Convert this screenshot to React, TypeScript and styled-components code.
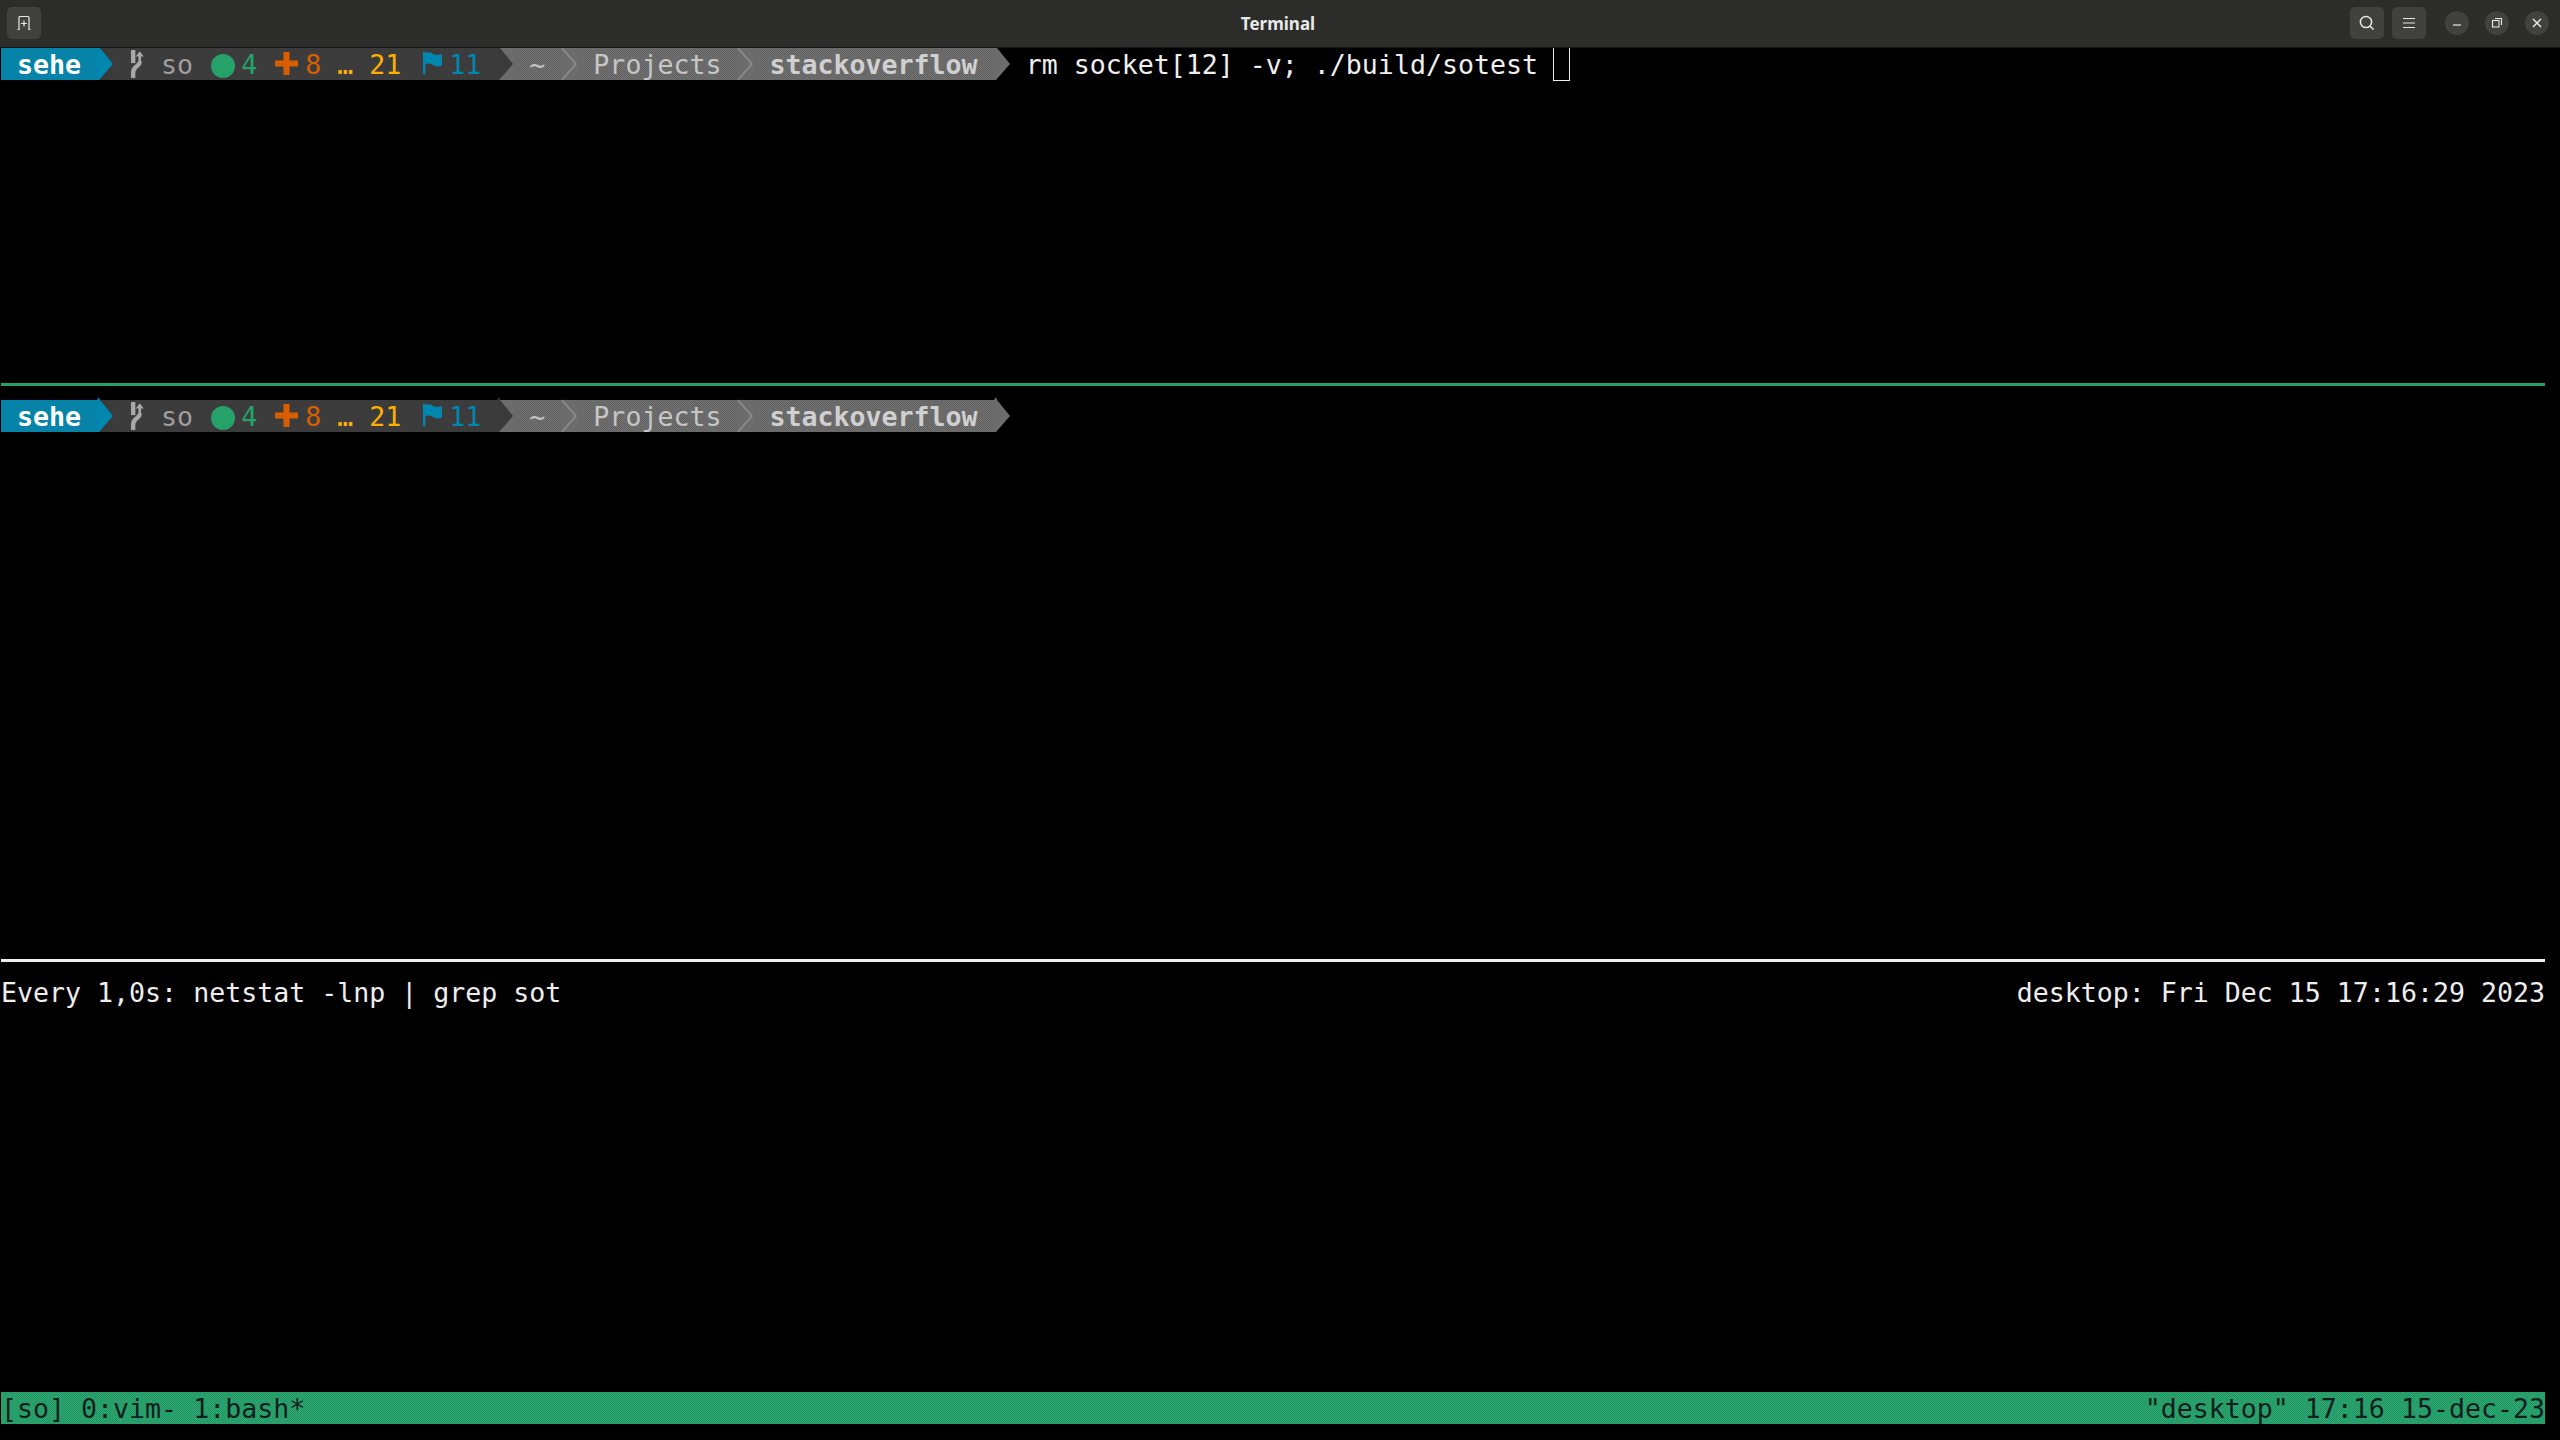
import React from 'react';
import styled, { createGlobalStyle, css } from 'styled-components';

const CELL = 16;
const ROW = 32;

// the source is a GIF, flat colours come out with a 2px dither on them
const dither = css`
  background-image: conic-gradient(
    rgba(0, 0, 0, 0.09) 25%,
    rgba(255, 255, 255, 0.04) 0 50%,
    rgba(0, 0, 0, 0.09) 0 75%,
    rgba(255, 255, 255, 0.04) 0
  );
  background-size: 2px 2px;
`;

const GlobalStyle = createGlobalStyle`
  html, body {
    margin: 0;
    padding: 0;
    background: #000;
  }
`;

const Window = styled.div`
  width: 2560px;
  height: 1440px;
  background: #000;
  overflow: hidden;
  font-family: "DejaVu Sans Mono", "Liberation Mono", monospace;
  font-size: 26.6px;
  color: #eeeeee;
`;

const TitleBar = styled.div`
  position: relative;
  z-index: 1;
  height: 48px;
  box-sizing: border-box;
  border-bottom: 1px solid #141414;
  padding: 7px 11px 0 7px;
  display: flex;
  align-items: flex-start;
  background-color: #2c2c2a;
  background-image: conic-gradient(#25252e 25%, #333326 0 50%, #25252e 0 75%, #333326 0);
  background-size: 2px 2px;
`;

const TitleGroup = styled.div<{ $end?: boolean }>`
  flex: 1 1 0;
  display: flex;
  justify-content: ${(p) => (p.$end ? 'flex-end' : 'flex-start')};
`;

const TitleText = styled.div`
  font-family: "Noto Sans", "Open Sans", sans-serif;
  font-size: 17px;
  font-weight: 700;
  line-height: 34px;
  color: #e8e8e8;
`;

const HeaderButton = styled.div<{ $gap?: number }>`
  width: 34px;
  height: 32px;
  border-radius: 5px;
  background: rgba(255, 255, 255, 0.1);
  display: flex;
  align-items: center;
  justify-content: center;
  margin-left: ${(p) => p.$gap ?? 0}px;
`;

const WindowButton = styled.div<{ $gap: number }>`
  width: 24px;
  height: 24px;
  margin: 4px 0 0 ${(p) => p.$gap}px;
  border-radius: 50%;
  background: rgba(255, 255, 255, 0.1);
  display: flex;
  align-items: center;
  justify-content: center;
`;

const Screen = styled.div`
  padding-left: 1px;
  width: 2544px;
`;

const Row = styled.div`
  height: ${ROW}px;
  display: flex;
  align-items: flex-end;
  white-space: pre;
`;

const SpacerRows = styled.div<{ $rows: number }>`
  height: ${(p) => p.$rows * ROW}px;
`;

const Segment = styled.div<{ $bg: string; $color: string; $bold?: boolean; $flat?: boolean }>`
  height: ${ROW}px;
  display: flex;
  align-items: flex-start;
  background-color: ${(p) => p.$bg};
  ${(p) => !p.$flat && dither}
  color: ${(p) => p.$color};
  font-weight: ${(p) => (p.$bold ? 700 : 400)};
  line-height: ${ROW + 2}px;
`;

const Text = styled.span<{ $color?: string }>`
  color: ${(p) => p.$color ?? 'inherit'};
`;

const Glyph = styled.span<{ $cols: number; $left: number; $top: number }>`
  width: ${(p) => p.$cols * CELL}px;
  height: ${ROW}px;
  box-sizing: border-box;
  flex: none;
  display: flex;
  align-items: flex-start;
  padding: ${(p) => p.$top}px 0 0 ${(p) => p.$left}px;

  svg {
    display: block;
  }
`;

const Arrow = styled.svg`
  display: block;
  flex: none;
  width: ${CELL}px;
  height: 35px;
`;

const Separator = styled.div<{ $color: string; $height: number }>`
  height: ${ROW}px;
  display: flex;
  align-items: center;

  &::before {
    content: '';
    flex: 1;
    height: ${(p) => p.$height}px;
    background: ${(p) => p.$color};
  }
`;

const WatchHeader = styled.div`
  height: ${ROW}px;
  line-height: ${ROW + 2}px;
  display: flex;
  justify-content: space-between;
  white-space: pre;
  color: #eeeeee;
`;

const StatusBar = styled.div`
  height: ${ROW}px;
  line-height: ${ROW + 2}px;
  display: flex;
  justify-content: space-between;
  white-space: pre;
  background-color: #25a46c;
  ${dither}
  color: #10201c;
`;

const Cursor = styled.span`
  width: ${CELL + 1}px;
  height: 34px;
  box-sizing: border-box;
  margin: 0 0 -1px -1px;
  border: 1px solid #eeeeee;
  flex: none;
`;

const SegmentArrow = ({ from, to }: { from: string; to: string }) => (
  <Arrow viewBox="0 0 16 35">
    <rect y="3" width="16" height="32" fill={to} />
    <path d="M0 3 L2 0 L3 3 L16 19 L2 35 L0 35 Z" fill={from} />
  </Arrow>
);

const Chevron = () => (
  <Arrow viewBox="0 0 16 35">
    <rect y="3" width="16" height="32" fill="#6c6c6c" />
    <path d="M1 3 L15 19 L1 35" fill="none" stroke="#8e8e8e" strokeWidth="1.6" />
  </Arrow>
);

const BranchIcon = () => (
  <svg width="16" height="32" viewBox="0 0 16 32">
    <path d="M2.5 0 V15" fill="none" stroke="#a8a8a8" strokeWidth="5" />
    <path d="M2.5 32 V25 Q2.5 22 6 19 Q10 16 10 13" fill="none" stroke="#a8a8a8" strokeWidth="5" />
    <path d="M10 14 V6" fill="none" stroke="#a8a8a8" strokeWidth="3" />
    <path d="M5.5 7.5 L10 1.5 L14.5 7.5 Z" fill="#a8a8a8" />
  </svg>
);

const PlusIcon = () => (
  <svg width="23" height="23" viewBox="0 0 23 23">
    <path d="M8.5 0 H14.5 V8.5 H23 V14.5 H14.5 V23 H8.5 V14.5 H0 V8.5 H8.5 Z" fill="#d75f00" />
  </svg>
);

const FlagIcon = () => (
  <svg width="19" height="22" viewBox="0 0 19 22">
    <path d="M1.2 0 V22" stroke="#0087af" strokeWidth="2.4" />
    <path d="M2 1 Q6 -1 10 2 Q14 4 19 2 V13.5 Q14 15.5 10 13 Q6 10.5 2 12.5 Z" fill="#0087af" />
  </svg>
);

const Dot = () => (
  <svg width="24" height="24" viewBox="0 0 24 24">
    <circle cx="12" cy="12" r="12" fill="#26a269" />
  </svg>
);

const Prompt = ({ command }: { command?: boolean }) => (
  <Row>
    <Segment $bg="#0087af" $color="#ffffff" $bold>
      {' sehe '}
    </Segment>
    <SegmentArrow from="#0087af" to="#3a3a3a" />
    <Segment $bg="#3a3a3a" $color="#9e9e9e">
      <Glyph $cols={2} $left={18} $top={0}>
        <BranchIcon />
      </Glyph>
      {' so '}
      <Glyph $cols={2} $left={2} $top={6}>
        <Dot />
      </Glyph>
      <Text $color="#26a269">4 </Text>
      <Glyph $cols={2} $left={2} $top={4}>
        <PlusIcon />
      </Glyph>
      <Text $color="#d75f00">8 </Text>
      <Text $color="#ffaf00">… 21 </Text>
      <Glyph $cols={2} $left={6} $top={4}>
        <FlagIcon />
      </Glyph>
      <Text $color="#0087af">11 </Text>
    </Segment>
    <SegmentArrow from="#3a3a3a" to="#6c6c6c" />
    <Segment $bg="#6c6c6c" $color="#c6c6c6">
      {' ~ '}
    </Segment>
    <Chevron />
    <Segment $bg="#6c6c6c" $color="#c6c6c6">
      {' Projects '}
    </Segment>
    <Chevron />
    <Segment $bg="#6c6c6c" $color="#d0d0d0" $bold>
      {' stackoverflow '}
    </Segment>
    <SegmentArrow from="#6c6c6c" to="#000000" />
    {command && (
      <>
        <Segment $bg="#000" $color="#eeeeee" $flat>
          {' rm socket[12] -v; ./build/sotest '}
        </Segment>
        <Cursor />
      </>
    )}
  </Row>
);

export default function App() {
  return (
    <Window>
      <GlobalStyle />
      <TitleBar>
        <TitleGroup>
          <HeaderButton>
            <svg width="16" height="16" viewBox="0 0 16 16" fill="none" stroke="#e8e8e8" strokeWidth="1.2">
              <path d="M1.5 14.5 H3 V2.5 Q3 1.5 4 1.5 H12 Q13 1.5 13 2.5 V14.5 H14.5" />
              <path d="M8 5.5 V11.5 M5 8.5 H11" />
            </svg>
          </HeaderButton>
        </TitleGroup>
        <TitleText>Terminal</TitleText>
        <TitleGroup $end>
          <HeaderButton>
            <svg width="16" height="16" viewBox="0 0 16 16" fill="none" stroke="#e8e8e8" strokeWidth="1.5">
              <circle cx="7" cy="7" r="5.6" />
              <path d="M11 11 L14.5 14.5" />
            </svg>
          </HeaderButton>
          <HeaderButton $gap={8}>
            <svg width="16" height="16" viewBox="0 0 16 16" stroke="#e8e8e8" strokeWidth="1.2">
              <path d="M2 3.5 H14 M2 8 H14 M2 12.5 H14" />
            </svg>
          </HeaderButton>
          <WindowButton $gap={19}>
            <svg width="12" height="12" viewBox="0 0 12 12" stroke="#e8e8e8" strokeWidth="1.2">
              <path d="M2 8 H10" />
            </svg>
          </WindowButton>
          <WindowButton $gap={16}>
            <svg width="12" height="12" viewBox="0 0 12 12" fill="none" stroke="#e8e8e8" strokeWidth="1.1">
              <rect x="1.5" y="3.5" width="6.5" height="6.5" />
              <path d="M4 1.5 H10.5 V8" />
            </svg>
          </WindowButton>
          <WindowButton $gap={16}>
            <svg width="12" height="12" viewBox="0 0 12 12" stroke="#e8e8e8" strokeWidth="1.5">
              <path d="M2 2 L10 10 M10 2 L2 10" />
            </svg>
          </WindowButton>
        </TitleGroup>
      </TitleBar>
      <Screen>
        <Prompt command />
        <SpacerRows $rows={9} />
        <Separator $color="#26a269" $height={3} />
        <Prompt />
        <SpacerRows $rows={16} />
        <Separator $color="#eeeeee" $height={3} />
        <WatchHeader>
          <span>Every 1,0s: netstat -lnp | grep sot</span>
          <span>desktop: Fri Dec 15 17:16:29 2023</span>
        </WatchHeader>
        <SpacerRows $rows={12} />
        <StatusBar>
          <span>[so] 0:vim- 1:bash*</span>
          <span>"desktop" 17:16 15-dec-23</span>
        </StatusBar>
      </Screen>
    </Window>
  );
}
